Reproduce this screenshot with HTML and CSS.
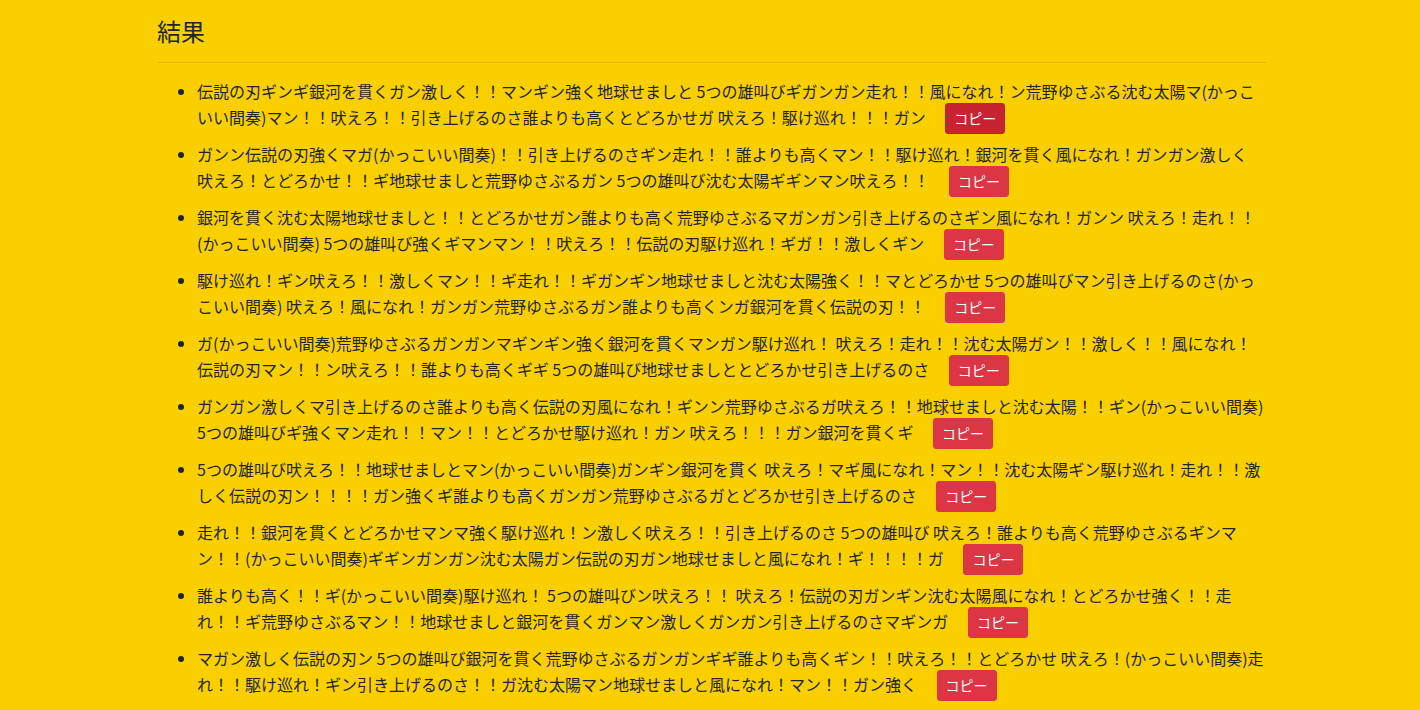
FILE: index.html
```html
<!DOCTYPE html>
<html lang="ja">
<head>
<meta charset="utf-8">
<title>結果</title>
<link rel="stylesheet" href="styles.css">
</head>
<body>
<div class="container">
  <h4 class="title">結果</h4>
  <hr class="divider">
  <ul class="results">
    <li class="item">伝説の刃ギンギ銀河を貫くガン激しく！！マンギン強く地球せましと 5つの雄叫びギガンガン走れ！！風になれ！ン荒野ゆさぶる沈む太陽マ(かっこいい間奏)マン！！吠えろ！！引き上げるのさ誰よりも高くとどろかせガ 吠えろ！駆け巡れ！！！ガン <button class="btn-copy active">コピー</button></li>
    <li class="item">ガンン伝説の刃強くマガ(かっこいい間奏)！！引き上げるのさギン走れ！！誰よりも高くマン！！駆け巡れ！銀河を貫く風になれ！ガンガン激しく<br>吠えろ！とどろかせ！！ギ地球せましと荒野ゆさぶるガン 5つの雄叫び沈む太陽ギギンマン吠えろ！！ <button class="btn-copy">コピー</button></li>
    <li class="item">銀河を貫く沈む太陽地球せましと！！とどろかせガン誰よりも高く荒野ゆさぶるマガンガン引き上げるのさギン風になれ！ガンン 吠えろ！走れ！！(かっこいい間奏) 5つの雄叫び強くギマンマン！！吠えろ！！伝説の刃駆け巡れ！ギガ！！激しくギン <button class="btn-copy">コピー</button></li>
    <li class="item">駆け巡れ！ギン吠えろ！！激しくマン！！ギ走れ！！ギガンギン地球せましと沈む太陽強く！！マとどろかせ 5つの雄叫びマン引き上げるのさ(かっこいい間奏) 吠えろ！風になれ！ガンガン荒野ゆさぶるガン誰よりも高くンガ銀河を貫く伝説の刃！！ <button class="btn-copy">コピー</button></li>
    <li class="item">ガ(かっこいい間奏)荒野ゆさぶるガンガンマギンギン強く銀河を貫くマンガン駆け巡れ！ 吠えろ！走れ！！沈む太陽ガン！！激しく！！風になれ！伝説の刃マン！！ン吠えろ！！誰よりも高くギギ 5つの雄叫び地球せましととどろかせ引き上げるのさ <button class="btn-copy">コピー</button></li>
    <li class="item">ガンガン激しくマ引き上げるのさ誰よりも高く伝説の刃風になれ！ギンン荒野ゆさぶるガ吠えろ！！地球せましと沈む太陽！！ギン(かっこいい間奏) 5つの雄叫びギ強くマン走れ！！マン！！とどろかせ駆け巡れ！ガン 吠えろ！！！ガン銀河を貫くギ <button class="btn-copy">コピー</button></li>
    <li class="item">5つの雄叫び吠えろ！！地球せましとマン(かっこいい間奏)ガンギン銀河を貫く 吠えろ！マギ風になれ！マン！！沈む太陽ギン駆け巡れ！走れ！！激しく伝説の刃ン！！！！ガン強くギ誰よりも高くガンガン荒野ゆさぶるガとどろかせ引き上げるのさ <button class="btn-copy">コピー</button></li>
    <li class="item">走れ！！銀河を貫くとどろかせマンマ強く駆け巡れ！ン激しく吠えろ！！引き上げるのさ 5つの雄叫び 吠えろ！誰よりも高く荒野ゆさぶるギンマン！！(かっこいい間奏)ギギンガンガン沈む太陽ガン伝説の刃ガン地球せましと風になれ！ギ！！！！ガ <button class="btn-copy">コピー</button></li>
    <li class="item">誰よりも高く！！ギ(かっこいい間奏)駆け巡れ！ 5つの雄叫びン吠えろ！！ 吠えろ！伝説の刃ガンギン沈む太陽風になれ！とどろかせ強く！！走れ！！ギ荒野ゆさぶるマン！！地球せましと銀河を貫くガンマン激しくガンガン引き上げるのさマギンガ <button class="btn-copy">コピー</button></li>
    <li class="item">マガン激しく伝説の刃ン 5つの雄叫び銀河を貫く荒野ゆさぶるガンガンギギ誰よりも高くギン！！吠えろ！！とどろかせ 吠えろ！(かっこいい間奏)走れ！！駆け巡れ！ギン引き上げるのさ！！ガ沈む太陽マン地球せましと風になれ！マン！！ガン強く <button class="btn-copy">コピー</button></li>
  </ul>
</div>
</body>
</html>
```
FILE: styles.css
```css
html, body {
  margin: 0;
  padding: 0;
}
body {
  background: #facf00;
  color: #212529;
  font-family: "Noto Sans CJK JP", "Noto Sans", sans-serif;
  font-size: 16px;
  line-height: 1.5;
}
.container {
  width: 1110px;
  margin-left: 157px;
  padding-top: 17px;
}
.title {
  margin: 0;
  font-size: 24px;
  font-weight: 400;
  line-height: 1.2;
}
.divider {
  margin: 16px 0;
  border: 0;
  border-top: 1px solid rgba(0, 0, 0, 0.1);
  height: 0;
}
.results {
  margin: 0;
  padding-left: 40px;
}
.item {
  margin-bottom: 8px;
}
.btn-copy {
  display: inline-block;
  margin-left: 16px;
  padding: 4px 8px;
  font-family: "Noto Sans CJK JP", "Noto Sans", sans-serif;
  font-size: 14px;
  line-height: 1.5;
  color: #fff;
  background: #dc3545;
  border: 1px solid #dc3545;
  border-radius: 3px;
  cursor: pointer;
}
.btn-copy.active {
  background: #c82333;
  border-color: #bd2130;
}
```
